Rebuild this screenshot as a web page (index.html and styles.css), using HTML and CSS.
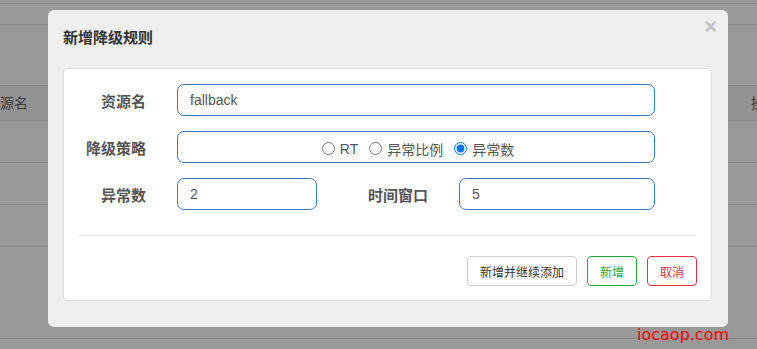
FILE: index.html
```html
<!DOCTYPE html>
<html lang="zh-CN">
<head>
    <meta charset="UTF-8">
    <title>新增降级规则</title>
    <link rel="stylesheet" href="styles.css">
</head>
<body>

    <!-- Page behind the dialog -->
    <div class="page">
        <div class="top-bar"></div>
        <div class="tool-bar"></div>
        <div class="spacer"></div>
        <div class="table-head">
            <span class="head-cell">源名</span>
            <span class="head-cell head-right">操</span>
        </div>
        <div class="table-row"></div>
        <div class="table-row"></div>
        <div class="table-row"></div>
        <div class="table-foot"></div>
    </div>

    <!-- Dialog -->
    <div class="modal">
        <div class="modal-header">
            <h4 class="modal-title">新增降级规则</h4>
            <span class="close-btn">&times;</span>
        </div>

        <div class="panel">
            <div class="form-row">
                <label class="form-label">资源名</label>
                <input class="form-input wide" type="text" value="fallback">
            </div>

            <div class="form-row">
                <label class="form-label">降级策略</label>
                <div class="form-input wide radio-box">
                    <label class="radio"><input type="radio" name="grade"> RT</label>
                    <label class="radio"><input type="radio" name="grade"> 异常比例</label>
                    <label class="radio"><input type="radio" name="grade" checked> 异常数</label>
                </div>
            </div>

            <div class="form-row">
                <label class="form-label">异常数</label>
                <input class="form-input short" type="text" value="2">
                <label class="form-label second">时间窗口</label>
                <input class="form-input medium" type="text" value="5">
            </div>

            <hr class="divider">

            <div class="button-group">
                <button class="btn btn-default">新增并继续添加</button>
                <button class="btn btn-success">新增</button>
                <button class="btn btn-danger">取消</button>
            </div>
        </div>
    </div>

    <div class="watermark">iocaop.com</div>

</body>
</html>
```

FILE: styles.css
```css
body {
    margin: 0;
    padding: 0;
    background-color: #999;
    font-family: 'Noto Sans CJK SC', sans-serif;
    overflow: hidden;
}

/* Background page under the overlay */
.page {
    width: 100%;
}

.top-bar {
    height: 3px;
    border-bottom: 1px solid #888;
}

.tool-bar {
    height: 20px;
    border-bottom: 1px solid #888;
}

.spacer {
    height: 60px;
}

.table-head {
    height: 34px;
    background-color: #929292;
    border-top: 1px solid #878787;
    border-bottom: 1px solid #878787;
    display: flex;
    justify-content: space-between;
    align-items: center;
}

.head-cell {
    font-size: 14px;
    color: #3c3c3c;
    margin-top: -2px;
}

.head-right {
    margin-right: -8px;
}

.table-row {
    height: 41px;
    border-bottom: 1px solid #878787;
}

.table-foot {
    height: 91px;
    border-bottom: 1px solid #878787;
}

/* Dialog */
.modal {
    position: absolute;
    left: 48px;
    top: 10px;
    width: 680px;
    height: 317px;
    background-color: #efefef;
    border-radius: 6px;
}

.modal-header {
    position: relative;
    padding: 16px 15px 0 15px;
}

.modal-title {
    margin: 0;
    font-size: 15px;
    line-height: 22px;
    font-weight: bold;
    color: #333;
}

.close-btn {
    position: absolute;
    right: 11px;
    top: 4px;
    font-family: 'Liberation Sans', sans-serif;
    font-size: 22px;
    font-weight: bold;
    color: #c2c2c2;
}

.panel {
    margin: 20px 16px 0 15px;
    padding: 15px 0 14px 0;
    background: #fff;
    border: 1px solid #ddd;
    border-radius: 4px;
}

.form-row {
    display: flex;
    align-items: center;
    height: 32px;
    margin-bottom: 15px;
}

.form-row:last-of-type {
    margin-bottom: 0;
}

.form-label {
    width: 82px;
    margin-right: 31px;
    text-align: right;
    font-size: 15px;
    font-weight: bold;
    color: #555;
}

.form-label.second {
    width: 111px;
}

.form-input {
    box-sizing: border-box;
    height: 32px;
    padding: 0 12px;
    font-family: 'Liberation Sans', sans-serif;
    font-size: 14px;
    color: #555;
    background: #fff;
    border: 1px solid #3c7cbd;
    border-radius: 7px;
    outline: none;
}

.wide {
    width: 478px;
}

.short {
    width: 140px;
}

.medium {
    width: 196px;
}

.radio-box {
    display: flex;
    justify-content: center;
    align-items: center;
    gap: 11px;
    padding-top: 3px;
    padding-left: 16px;
}

.radio {
    font-family: 'Liberation Sans', 'Noto Sans CJK SC', sans-serif;
    font-size: 14px;
    color: #555;
    display: flex;
    align-items: center;
}

.radio input {
    margin: 0 5px 0 0;
    width: 13px;
    height: 13px;
}

.divider {
    margin: 25px 15px 20px 15px;
    border: none;
    border-top: 1px solid #e5e5e5;
}

.button-group {
    display: flex;
    justify-content: flex-end;
    gap: 10px;
    padding-right: 14px;
}

.btn {
    height: 30px;
    padding: 0 12px;
    font-family: 'Noto Sans CJK SC', sans-serif;
    font-size: 12px;
    background: #fff;
    border-radius: 4px;
    cursor: pointer;
}

.btn-default {
    color: #333;
    border: 1px solid #ccc;
}

.btn-success {
    color: #28a745;
    border: 1px solid #28a745;
}

.btn-danger {
    color: #dc3545;
    border: 1px solid #dc3545;
}

.watermark {
    position: absolute;
    left: 637px;
    top: 326px;
    font-family: 'DejaVu Sans', sans-serif;
    font-size: 16px;
    line-height: 18px;
    color: #ff0000;
}
```
